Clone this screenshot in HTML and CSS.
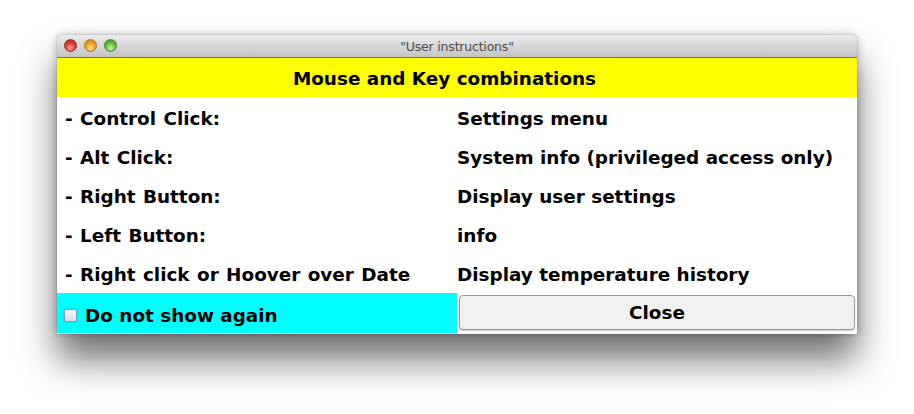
FILE: index.html
```html
<!DOCTYPE html>
<html>
<head>
<meta charset="utf-8">
<link rel="stylesheet" href="styles.css">
</head>
<body>
<div class="window">
  <div class="titlebar">
    <div class="lights">
      <span class="light red"></span>
      <span class="light yellow"></span>
      <span class="light green"></span>
    </div>
    <div class="title">"User instructions"</div>
  </div>
  <div class="content">
    <div class="header">Mouse and Key combinations</div>
    <div class="grid">
      <div class="cell">- Control Click:</div><div class="cell">Settings menu</div>
      <div class="cell">- Alt Click:</div><div class="cell">System info (privileged access only)</div>
      <div class="cell">- Right Button:</div><div class="cell">Display user settings</div>
      <div class="cell">- Left Button:</div><div class="cell">info</div>
      <div class="cell">- Right click or Hoover over Date</div><div class="cell">Display temperature history</div>
    </div>
    <div class="footer">
      <label class="check"><span class="box"></span>Do not show again</label>
      <div class="btnwrap"><button class="close">Close</button></div>
    </div>
  </div>
</div>
</body>
</html>
```
FILE: styles.css
```css
html, body { margin: 0; background: #fff; }
body { padding: 35px 57px 0 57px; height: 414px; box-sizing: border-box; overflow: hidden; }
.window {
  width: 800px;
  background: #fff;
  border-radius: 5px 5px 0 0;
  box-shadow: 0 26px 36px rgba(0,0,0,0.55), 0 0 8px rgba(0,0,0,0.25), 0 0 1px rgba(0,0,0,0.6);
  font-family: "DejaVu Sans", "Liberation Sans", sans-serif;
}
.titlebar {
  height: 22px;
  position: relative;
  display: flex;
  align-items: center;
  justify-content: center;
  background: linear-gradient(#ececec, #d4d4d4 60%, #c4c4c4);
  border-bottom: 1px solid #6f6f6f;
  border-radius: 5px 5px 0 0;
}
.lights { position: absolute; left: 7px; top: 4px; display: flex; gap: 7px; }
.light { width: 13px; height: 13px; border-radius: 50%; box-sizing: border-box; }
.light.red { background: radial-gradient(circle at 50% 72%, #ffa79c, #e0443a 45%, #a81a12); border: 1px solid #9a2e27; }
.light.yellow { background: radial-gradient(circle at 50% 72%, #ffe49a, #f2a628 45%, #b8750a); border: 1px solid #a8752a; }
.light.green { background: radial-gradient(circle at 50% 72%, #d0f8a6, #6ec24a 45%, #3a8a1e); border: 1px solid #4a8232; }
.title { font-size: 12.5px; color: #4a4a4a; font-family: "DejaVu Sans", sans-serif; letter-spacing: -0.2px; }
.header {
  background: #ffff00;
  height: 39px;
  display: flex;
  align-items: center;
  justify-content: center;
  padding-right: 25px;
  padding-top: 2px;
  box-sizing: border-box;
  font-weight: bold;
  font-size: 18.4px;
  color: #000;
}
.grid { display: grid; grid-template-columns: 400px 400px; }
.cell {
  height: 39px;
  display: flex;
  align-items: center;
  font-weight: bold;
  font-size: 18.4px;
  color: #000;
  padding-top: 3px;
  box-sizing: border-box;
}
.grid .cell:nth-child(odd) { padding-left: 8px; word-spacing: 1px; }
.footer { display: grid; grid-template-columns: 400px 400px; height: 42px; padding-top: 1px; padding-bottom: 2px; box-sizing: border-box; }
.check {
  background: #00ffff;
  display: flex;
  align-items: center;
  font-weight: bold;
  font-size: 18.4px;
  padding-left: 7px;
  padding-top: 4px;
  box-sizing: border-box;
}
.box {
  width: 11px; height: 11px;
  border: 1px solid #8a9ac8;
  border-radius: 2px;
  background: linear-gradient(#f6f7fb, #d9dee9);
  margin-right: 8px;
  box-shadow: 0 0 2px rgba(60,90,200,0.6);
}
.btnwrap { padding: 2px 2px 3px 2px; box-sizing: border-box; }
.close {
  width: 100%; height: 35px;
  background: #f0f0f0;
  border: 1px solid #9a9a9a;
  border-radius: 4px;
  font-family: "DejaVu Sans", sans-serif;
  font-weight: bold;
  font-size: 18.4px;
  color: #000;
  box-shadow: 0 1px 1px rgba(0,0,0,0.2);
}
```
